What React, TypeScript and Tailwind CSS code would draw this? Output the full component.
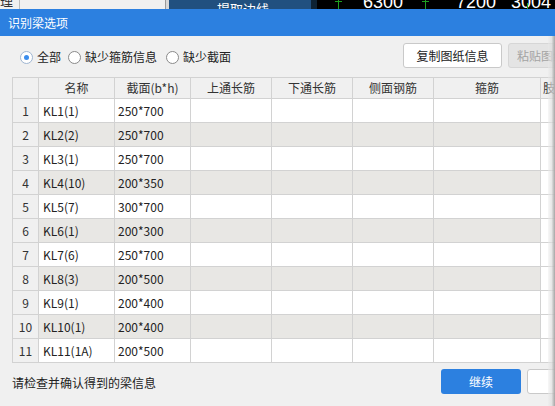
import React from "react";

const rows: [string, string][] = [
  ["KL1(1)", "250*700"],
  ["KL2(2)", "250*700"],
  ["KL3(1)", "250*700"],
  ["KL4(10)", "200*350"],
  ["KL5(7)", "300*700"],
  ["KL6(1)", "200*300"],
  ["KL7(6)", "250*700"],
  ["KL8(3)", "200*500"],
  ["KL9(1)", "200*400"],
  ["KL10(1)", "200*400"],
  ["KL11(1A)", "200*500"],
];

const headers = ["", "名称", "截面(b*h)", "上通长筋", "下通长筋", "侧面钢筋", "箍筋", "肢数"];

function Radio({ checked, label }: { checked?: boolean; label: string }) {
  return (
    <label className="flex items-center gap-[4px]">
      <span
        className={
          checked
            ? "flex h-[13px] w-[13px] items-center justify-center rounded-full border border-[#9fb6d2] bg-white"
            : "flex h-[13px] w-[13px] items-center justify-center rounded-full border border-[#8a8a8a] bg-white"
        }
      >
        {checked && <span className="h-[5px] w-[5px] rounded-full bg-[#3b8ded]" />}
      </span>
      <span className="text-[12px] leading-none text-[#222]">{label}</span>
    </label>
  );
}

export default function App() {
  return (
    <div
      className="relative h-[406px] w-[555px] overflow-hidden bg-[#f0f0f0]"
      style={{ fontFamily: '"Noto Sans CJK SC", "Noto Sans", sans-serif' }}
    >
      {/* background app strip */}
      <div className="flex h-[9px] w-full overflow-hidden">
        <div className="relative w-[20px] border-r border-[#bdbdbd] bg-[#f0f0f0]">
          <span className="absolute left-[0px] top-[-6px] text-[13px] leading-[13px] text-[#333]">理</span>
        </div>
        <div className="w-[146px] border-r border-[#9a9a9a] bg-[#f0f0f0]" />
        <div className="w-[3px] bg-[#d8d8d8]" />
        <div className="relative w-[142px] bg-[#21507f]">
          <span className="absolute left-[48px] top-[2px] text-[13px] leading-[13px] text-white">提取边线</span>
        </div>
        <div className="w-[6px] bg-[#0d2233]" />
        <div className="relative flex-1 bg-black">
          <div className="absolute left-[21px] top-0 h-[9px] w-[1px] bg-[#1fa01f]" />
          <div className="absolute left-[18px] top-[1px] h-[1px] w-[7px] bg-[#1fa01f]" />
          <span
            className="absolute left-[46px] top-[-7px] text-[18px] leading-[18px] text-white"
            style={{ fontFamily: '"Liberation Sans", sans-serif' }}
          >
            6300
          </span>
          <div className="absolute left-[108px] top-0 h-[9px] w-[1px] bg-[#1fa01f]" />
          <div className="absolute left-[105px] top-[1px] h-[1px] w-[7px] bg-[#1fa01f]" />
          <span
            className="absolute left-[139px] top-[-7px] text-[18px] leading-[18px] text-white"
            style={{ fontFamily: '"Liberation Sans", sans-serif' }}
          >
            7200
          </span>
          <span
            className="absolute left-[194px] top-[-7px] text-[18px] leading-[18px] text-white"
            style={{ fontFamily: '"Liberation Sans", sans-serif' }}
          >
            3004
          </span>
          <div className="absolute left-[210px] top-[3px] h-[6px] w-[1px] bg-[#1fa01f]" />
        </div>
      </div>

      {/* title bar */}
      <div className="flex h-[27px] items-center bg-[#2c80e0] pl-[8px] text-[12px] text-white">识别梁选项</div>

      {/* body */}
      <div className="flex w-[620px] flex-col pl-[12px] pr-[13px]">
        <div className="mt-[7px] flex h-[25px] items-center">
          <div className="flex items-center gap-[7px] pl-[8px] pt-[3px]">
            <Radio checked label="全部" />
            <Radio label="缺少箍筋信息" />
            <div className="ml-[2px]">
              <Radio label="缺少截面" />
            </div>
          </div>
          <div className="ml-auto flex gap-[6px]">
            <button className="flex h-[25px] w-[99px] items-center justify-center rounded-[3px] border border-[#c9c9c9] bg-white text-[12px] text-[#222]">
              复制图纸信息
            </button>
            <button className="flex h-[25px] w-[99px] items-center justify-start rounded-[3px] border border-[#d6d6d6] bg-[#e4e4e4] pl-[8px] text-[12px] text-[#a3a3a3]">
              粘贴图纸信息
            </button>
          </div>
        </div>

        {/* table */}
        <div className="mt-[9px] grid grid-cols-[26px_76px_76px_81px_81px_81px_107px_1fr] border-l border-t border-[#d2d2d2]">
          {headers.map((h, i) => (
            <div
              key={"h" + i}
              className={
                i === 7
                  ? "flex h-[21px] items-center border-b border-r border-[#d2d2d2] bg-[#f0f0f0] pl-[2px] text-[12px] text-[#333]"
                  : "flex h-[21px] items-center justify-center border-b border-r border-[#d2d2d2] bg-[#f0f0f0] text-[12px] text-[#333]"
              }
            >
              {h}
            </div>
          ))}
          {rows.map((r, idx) => {
            const zebra = idx % 2 === 1;
            const cell = zebra
              ? "h-[24px] border-b border-r border-[#d2d2d2] bg-[#e8e7e4]"
              : "h-[24px] border-b border-r border-[#d2d2d2] bg-white";
            return (
              <React.Fragment key={idx}>
                <div className="flex h-[24px] items-center justify-center border-b border-r border-[#d2d2d2] bg-[#f0f0f0] text-[12px] text-[#333]">
                  {idx + 1}
                </div>
                <div className={cell + " flex items-center pl-[4px] text-[12px] text-[#222]"}>{r[0]}</div>
                <div className={cell + " flex items-center pl-[3px] text-[12px] text-[#222]"}>{r[1]}</div>
                <div className={cell} />
                <div className={cell} />
                <div className={cell} />
                <div className={cell} />
                <div className="h-[24px] border-b border-r border-[#d2d2d2] bg-white" />
              </React.Fragment>
            );
          })}
        </div>

        {/* footer */}
        <div className="mt-[6px] flex h-[25px] items-center">
          <span className="pt-[2px] text-[12px] text-[#222]">请检查并确认得到的梁信息</span>
          <div className="ml-auto flex gap-[6px]">
            <button className="flex h-[25px] w-[80px] items-center justify-center rounded-[3px] bg-[#2c80e0] text-[12px] text-white">
              继续
            </button>
            <button className="flex h-[25px] w-[80px] items-center justify-center rounded-[3px] border border-[#c9c9c9] bg-white text-[12px] text-[#222]">
              取消
            </button>
          </div>
        </div>
      </div>

      {/* right edge shade */}
      <div className="absolute bottom-0 right-0 top-[36px] w-[7px] bg-gradient-to-r from-[#ececec]/40 via-[#dedede]/70 to-[#a6a6a6]" />
    </div>
  );
}
